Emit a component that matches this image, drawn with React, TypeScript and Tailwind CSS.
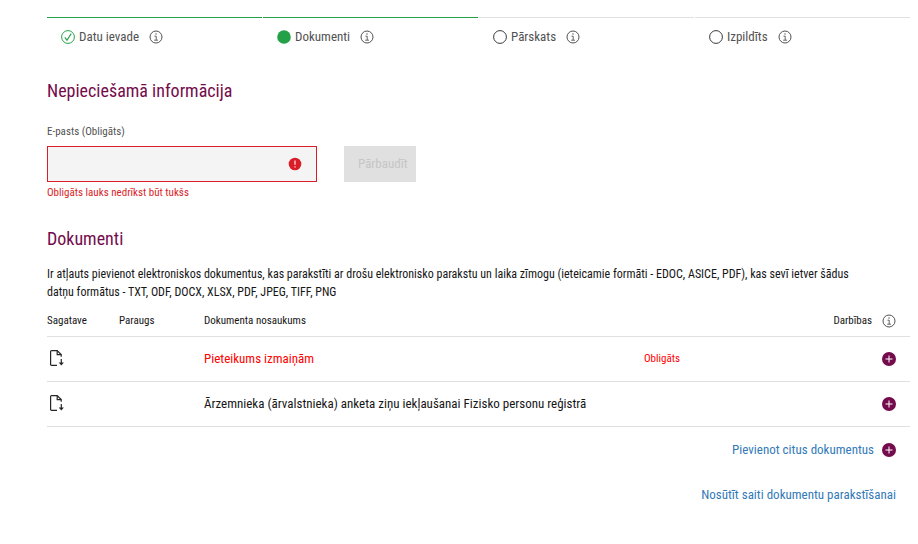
import React, { useState } from 'react';

type StepState = 'complete' | 'current' | 'incomplete';

interface Step {
  label: string;
  state: StepState;
}

interface DocumentRow {
  id: number;
  name: string;
  required: boolean;
}

const steps: Step[] = [
  { label: 'Datu ievade', state: 'complete' },
  { label: 'Dokumenti', state: 'current' },
  { label: 'Pārskats', state: 'incomplete' },
  { label: 'Izpildīts', state: 'incomplete' },
];

const documents: DocumentRow[] = [
  { id: 1, name: 'Pieteikums izmaiņām', required: true },
  { id: 2, name: 'Ārzemnieka (ārvalstnieka) anketa ziņu iekļaušanai Fizisko personu reģistrā', required: false },
];

const StepIcon: React.FC<{ state: StepState }> = ({ state }) => {
  if (state === 'complete') {
    return (
      <svg className="w-3.5 h-3.5 shrink-0" viewBox="0 0 14 14" fill="none" stroke="#24a148" aria-hidden="true">
        <circle cx="7" cy="7" r="6.4" />
        <path d="M3.8 7.4 6 10.2l4.2-6.6" strokeWidth="1.1" />
      </svg>
    );
  }
  return (
    <svg className="w-3.5 h-3.5 shrink-0" viewBox="0 0 14 14" aria-hidden="true">
      {state === 'current' ? (
        <circle cx="7" cy="7" r="6.8" fill="#24a148" />
      ) : (
        <circle cx="7" cy="7" r="6.4" fill="none" stroke="#393939" />
      )}
    </svg>
  );
};

const InfoButton: React.FC<{ label: string }> = ({ label }) => (
  <button type="button" aria-label={label} className="block shrink-0 cursor-pointer">
    <svg className="w-3.5 h-3.5" viewBox="0 0 14 14" fill="none" stroke="#525252" aria-hidden="true">
      <circle cx="7" cy="7" r="6" />
      <path d="M5.5 6.2h1.7v3.9M5.2 10.2h3.8" strokeWidth="0.9" />
      <circle cx="7" cy="4" r="0.7" fill="#525252" stroke="none" />
    </svg>
  </button>
);

const PlusIcon = () => (
  <svg className="w-3.5 h-3.5 shrink-0" viewBox="0 0 14 14" aria-hidden="true">
    <circle cx="7" cy="7" r="7" fill="#740b4c" />
    <path d="M7 3.5v7M3.5 7h7" stroke="#fff" />
  </svg>
);

const TemplateIcon = () => (
  <svg className="w-4 h-4 overflow-visible" viewBox="0 0 16 16" fill="none" stroke="#262626" strokeWidth="1.2" aria-hidden="true">
    <path d="M8 14.4H2.6a1 1 0 0 1-1-1V.6a1 1 0 0 1 1-1h5.6l4 4v2.2" />
    <path d="M8.2-.4v4h4" />
    <path d="M12.3 8v5" />
    <path d="M9.7 11.4h5.2l-2.6 3.2z" fill="#262626" stroke="none" />
  </svg>
);

const ProgressSteps = () => (
  <ol className="flex gap-px">
    {steps.map((step) => (
      <li
        key={step.label}
        aria-current={step.state === 'current' ? 'step' : undefined}
        className={`flex flex-1 items-center border-t pl-3.5 pt-[9px] leading-5 text-[#525252] ${
          step.state === 'incomplete' ? 'border-[#e0e0e0]' : 'border-[#24a148]'
        }`}
      >
        <StepIcon state={step.state} />
        <span className="ml-1 mr-2.5">{step.label}</span>
        <InfoButton label={`Informācija: ${step.label}`} />
      </li>
    ))}
  </ol>
);

const EmailForm = () => {
  const [email, setEmail] = useState('');
  const invalid = email.trim() === '';

  return (
    <form className="mt-[21px]" onSubmit={(e) => e.preventDefault()}>
      <label htmlFor="email" className="block text-[11px] leading-4 text-[#525252]">
        E-pasts (Obligāts)
      </label>
      <div className="mt-1.5 flex">
        <div className="relative w-[270px]">
          <input
            id="email"
            type="email"
            value={email}
            onChange={(e) => setEmail(e.target.value)}
            aria-invalid={invalid}
            aria-describedby="email-error"
            className={`block h-9 w-full border bg-[#f4f4f4] pl-3.5 pr-9 outline-none ${
              invalid ? 'border-[#da1e28]' : 'border-[#8d8d8d]'
            }`}
          />
          {invalid && (
            <svg className="absolute right-[15px] top-[11px] w-3.5 h-3.5" viewBox="0 0 14 14" aria-hidden="true">
              <circle cx="7" cy="7" r="6.3" fill="#da1e28" />
              <path d="M7 3.5v4.3" stroke="#fff" strokeWidth="1.1" />
              <circle cx="7" cy="9.9" r="0.7" fill="#fff" />
            </svg>
          )}
        </div>
        <button type="submit" disabled={invalid} className="ml-[27px] h-9 bg-[#e0e0e0] pl-3.5 pr-2 text-[#c6c6c6]">
          Pārbaudīt
        </button>
      </div>
      {invalid && (
        <p id="email-error" className="mt-[3px] text-[11px] leading-4 text-[#da1e28]">
          Obligāts lauks nedrīkst būt tukšs
        </p>
      )}
    </form>
  );
};

const DocumentTable = () => (
  <table className="mt-[5px] w-full text-left">
    <thead>
      <tr className="h-[30px] border-b border-[#e0e0e0] text-[11px]">
        <th className="w-[72px] font-normal">Sagatave</th>
        <th className="w-[85px] font-normal">Paraugs</th>
        <th className="font-normal">Dokumenta nosaukums</th>
        <td className="w-36"></td>
        <th className="w-[122px] pr-3.5 font-normal">
          <div className="flex items-center justify-end gap-2.5">
            Darbības
            <InfoButton label="Informācija: Darbības" />
          </div>
        </th>
      </tr>
    </thead>
    <tbody>
      {documents.map((doc) => (
        <tr key={doc.id} className="h-[45px] border-b border-[#e0e0e0]">
          <td className="pl-0.5">
            <button type="button" aria-label={`Lejupielādēt sagatavi: ${doc.name}`} className="block cursor-pointer">
              <TemplateIcon />
            </button>
          </td>
          <td></td>
          <td className={doc.required ? 'text-[#ff0000]' : ''}>{doc.name}</td>
          <td className="text-[11px] text-[#ff0000]">{doc.required && 'Obligāts'}</td>
          <td className="pr-3.5">
            <button type="button" aria-label={`Pievienot: ${doc.name}`} className="ml-auto block cursor-pointer">
              <PlusIcon />
            </button>
          </td>
        </tr>
      ))}
    </tbody>
  </table>
);

const App: React.FC = () => {
  return (
    <main className="bg-white pl-[47px] pr-2 pt-[17px] pb-10 font-['Roboto_Condensed','Roboto',sans-serif] text-[13px] leading-[18px] text-[#161616]">
      <ProgressSteps />

      <section>
        <h2 className="mt-8 text-lg leading-6 text-[#740b4c]">Nepieciešamā informācija</h2>
        <EmailForm />
      </section>

      <section>
        <h2 className="mt-[26px] text-lg leading-6 text-[#740b4c]">Dokumenti</h2>
        <p className="mt-3.5 pr-10 text-xs leading-[18px]">
          Ir atļauts pievienot elektroniskos dokumentus, kas parakstīti ar drošu elektronisko parakstu un laika zīmogu
          (ieteicamie formāti - EDOC, ASICE, PDF), kas sevī ietver šādus datņu formātus - TXT, ODF, DOCX, XLSX, PDF,
          JPEG, TIFF, PNG
        </p>
        <DocumentTable />

        {/* papildu darbības */}
        <div className="mt-3.5 flex flex-col items-end gap-[27px] pr-3.5 text-[#337ab7]">
          <a href="#pievienot" className="flex items-center gap-2">
            Pievienot citus dokumentus
            <PlusIcon />
          </a>
          <a href="#nosutit">Nosūtīt saiti dokumentu parakstīšanai</a>
        </div>
      </section>
    </main>
  );
};

export default App;
